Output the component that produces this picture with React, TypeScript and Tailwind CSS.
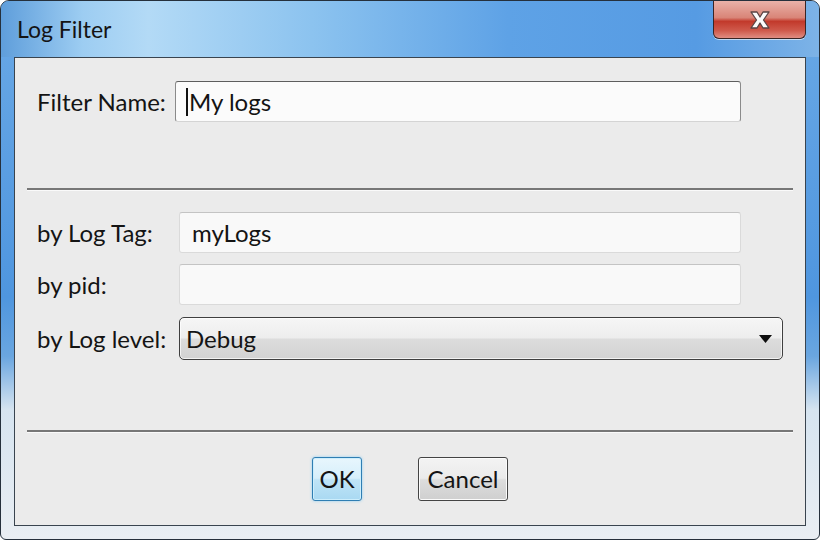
import React from "react";

const CloseGlyph = () => (
  <svg width="22" height="20" viewBox="0 0 22 20">
    <path
      d="M2 2H8L11 7L14 2H20L14.5 10L20 18H14L11 13L8 18H2L7.5 10Z"
      fill="#fbfbfb"
      stroke="#5a4444"
      strokeWidth="1.3"
      strokeLinejoin="round"
    />
  </svg>
);

const Caret = () => <span className="inline-block w-[2px] h-[28px] bg-[#111] mr-[1px]" />;

export default function App() {
  return (
    <div className="w-[820px] h-[540px] bg-white overflow-hidden font-[Lato,sans-serif] text-[#141414]">
      <div className="h-full flex flex-col rounded-t-[9px] rounded-b-[6px] border border-[#25303c] bg-[linear-gradient(180deg,#6aa9e6_0%,#4f96df_55%,#6aa6e0_66%,#d6e4f0_76%,#e9eef3_100%)]">
        {/* Title bar */}
        <div className="h-[56px] flex items-start rounded-t-[8px] bg-[linear-gradient(90deg,#5f9edb_0%,#9dcdf2_10%,#b3daf6_18%,#8cc3ef_38%,#5ea2e6_62%,#569be3_85%,#7db3e7_100%)]">
          <span className="pl-[16px] pt-[13px] text-[23px] leading-[30px]">Log Filter</span>
          <div className="ml-auto mr-[13px] w-[93px] h-[38px] flex items-center justify-center rounded-b-[6px] border-x border-b border-[#3a2525] bg-[linear-gradient(180deg,#e9b2a9_0%,#d98578_45%,#c2392b_55%,#cf5a4c_80%,#e08d82_100%)] shadow-[0_1px_0_rgba(255,255,255,0.6)]">
            <CloseGlyph />
          </div>
        </div>

        {/* Client area */}
        <div className="mx-[13px] flex-1 flex flex-col border border-[#39444f] bg-[#ebebeb] text-[24px]">
          <div className="pt-[23px] pl-[22px] flex items-center">
            <span className="w-[138px]">Filter Name:</span>
            <div className="w-[566px] h-[41px] flex items-center pl-[10px] bg-[#fbfbfb] rounded-[3px] border border-[#8a8a8a] border-t-[#5e5e5e] border-b-[#d4d4d4]">
              <Caret />
              <span>My logs</span>
            </div>
          </div>

          <div className="mx-[12px] mt-[66px] h-[3px] border-t-2 border-t-[#777777] border-b border-b-[#fafafa]" />

          <div className="mt-[21px] pl-[22px] flex flex-col">
            <div className="flex items-center">
              <span className="w-[142px]">by Log Tag:</span>
              <div className="w-[562px] h-[41px] flex items-center pl-[12px] bg-[#f9f9f9] rounded-[3px] border border-[#dadada] border-t-[#c4c4c4]">
                myLogs
              </div>
            </div>
            <div className="mt-[11px] flex items-center">
              <span className="w-[142px]">by pid:</span>
              <div className="w-[562px] h-[41px] bg-[#f9f9f9] rounded-[3px] border border-[#dadada] border-t-[#c4c4c4]" />
            </div>
            <div className="mt-[12px] flex items-center">
              <span className="w-[142px]">by Log level:</span>
              <div className="w-[604px] h-[43px] flex items-center pl-[6px] pr-[10px] rounded-[5px] border border-[#3f3f3f] bg-[linear-gradient(180deg,#f6f6f6_0%,#ededed_48%,#dcdcdc_52%,#d2d2d2_100%)] shadow-[inset_0_0_0_1px_rgba(255,255,255,0.7)]">
                <span>Debug</span>
                <svg className="ml-auto" width="13" height="8" viewBox="0 0 13 8">
                  <path d="M0 0H13L6.5 8Z" fill="#0d0d0d" />
                </svg>
              </div>
            </div>
          </div>

          <div className="mx-[12px] mt-[70px] h-[3px] border-t-2 border-t-[#777777] border-b border-b-[#fafafa]" />

          <div className="mt-[24px] flex justify-center gap-[56px]">
            <div className="w-[50px] h-[44px] flex items-center justify-center rounded-[3px] border border-[#2f7eb3] bg-[linear-gradient(180deg,#e8f6fd_0%,#d6effb_48%,#bfe4f7_52%,#a9d9f2_100%)] shadow-[inset_0_0_0_1px_#cdeefc,0_0_3px_#8fd0f3]">
              OK
            </div>
            <div className="w-[90px] h-[44px] flex items-center justify-center rounded-[3px] border border-[#444444] bg-[linear-gradient(180deg,#f3f3f3_0%,#ebebeb_48%,#dddddd_52%,#cfcfcf_100%)] shadow-[inset_0_0_0_1px_#fbfbfb]">
              Cancel
            </div>
          </div>
        </div>

        <div className="h-[13px]" />
      </div>
    </div>
  );
}
